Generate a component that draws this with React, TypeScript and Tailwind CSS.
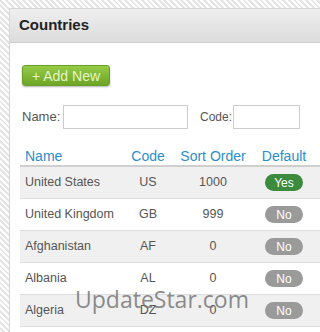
import React from "react";

const rows = [
  { name: "United States", code: "US", order: "1000", def: true },
  { name: "United Kingdom", code: "GB", order: "999", def: false },
  { name: "Afghanistan", code: "AF", order: "0", def: false },
  { name: "Albania", code: "AL", order: "0", def: false },
  { name: "Algeria", code: "DZ", order: "0", def: false },
];

export default function App() {
  return (
    <div
      className="relative w-[320px] h-[332px] overflow-hidden bg-[repeating-linear-gradient(45deg,#ffffff_0px,#ffffff_2px,#e4e4e4_2px,#e4e4e4_4px)] pt-[8px] pl-[9px]"
      style={{ fontFamily: '"Liberation Sans", Arial, sans-serif' }}
    >
      <div className="w-[311px] h-[330px] bg-white border-l border-t border-[#d6d6d6]">
        <div className="h-[34px] flex items-center pl-[9px] bg-gradient-to-b from-[#eeeeee] to-[#dddddd] border-b border-[#cfcfcf]">
          <span className="text-[15px] font-bold text-[#222]">Countries</span>
        </div>
        <div className="pl-[10px]">
          <div className="pt-[22px] pl-[2px]">
            <button className="w-[88px] h-[21px] rounded-[3px] bg-gradient-to-b from-[#95cb45] to-[#6ea527] border border-[#67a024] shadow-[0_1px_2px_rgba(0,0,0,0.3)] text-[14px] text-[#e4f4c6] leading-none flex items-center justify-center">
              + Add New
            </button>
          </div>
          <div className="mt-[19px] pl-[2px] flex items-center h-[24px] text-[13px] text-[#555]">
            <span className="w-[41px] shrink-0">Name:</span>
            <div className="w-[125px] h-[24px] shrink-0 border border-[#cccccc] bg-white" />
            <span className="ml-[12px] w-[33px] shrink-0 whitespace-nowrap text-[12px]">Code:</span>
            <div className="w-[67px] h-[24px] shrink-0 border border-[#cccccc] bg-white" />
          </div>
          <div className="mt-[17px]">
            <div className="grid grid-cols-[108px_40px_90px_52px_1fr] h-[21px] items-center text-[14px] text-[#2b8ec8] border-b-2 border-[#cfcfcf]">
              <span className="pl-[5px]">Name</span>
              <span className="text-center">Code</span>
              <span className="text-center">Sort Order</span>
              <span className="text-center">Default</span>
              <span />
            </div>
            {rows.map((r, i) => (
              <div
                key={r.name}
                className={`grid grid-cols-[108px_40px_90px_52px_1fr] h-[32px] items-center text-[12.5px] text-[#555] border-b border-[#dddddd] ${i % 2 === 0 ? "bg-[#f0f0f0]" : "bg-white"}`}
              >
                <span className="pl-[5px]">{r.name}</span>
                <span className="text-center">{r.code}</span>
                <span className="text-center">{r.order}</span>
                <span className="flex justify-center">
                  <span
                    className={`w-[38px] h-[17px] rounded-full flex items-center justify-center text-[12px] text-white leading-none ${r.def ? "bg-[#3b8a3e]" : "bg-[#9a9a9a]"}`}
                  >
                    {r.def ? "Yes" : "No"}
                  </span>
                </span>
                <span />
              </div>
            ))}
          </div>
        </div>
      </div>
      <div
        className="absolute left-[75px] top-[288px] text-[23px] text-[#6e6e6e]/80 leading-none pointer-events-none"
        style={{ fontFamily: '"Open Sans", "Noto Sans", sans-serif' }}
      >
        UpdateStar.com
      </div>
    </div>
  );
}
